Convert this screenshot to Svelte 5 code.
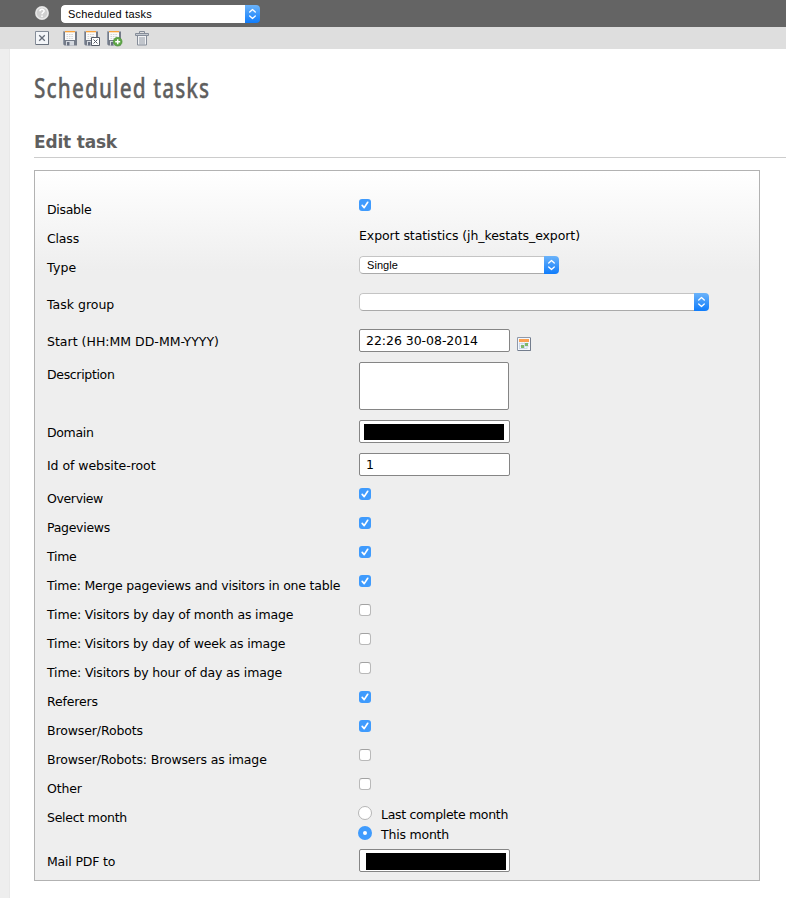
<script>
  const rows = [
    { label: 'Disable', w: 44.3, h: 29, kind: 'check', on: true },
    { label: 'Class', w: 32, h: 29, kind: 'text', value: 'Export statistics (jh_kestats_export)', vw: 221 },
    { label: 'Type', w: 29.5, h: 37, kind: 'select', value: 'Single', size: 200 },
    { label: 'Task group', w: 67.3, h: 37, kind: 'select', value: '', size: 350 },
    { label: 'Start (HH:MM DD-MM-YYYY)', w: 172, h: 33, kind: 'date', value: '22:26 30-08-2014', vw: 112 },
    { label: 'Description', w: 67.5, h: 58, kind: 'area' },
    { label: 'Domain', w: 46.5, h: 33, kind: 'redacted', x: 4, y: 3, bh: 16 },
    { label: 'Id of website-root', w: 108.5, h: 33, kind: 'input', value: '1', vw: 8 },
    { label: 'Overview', w: 56, h: 29, kind: 'check', on: true },
    { label: 'Pageviews', w: 63, h: 29, kind: 'check', on: true },
    { label: 'Time', w: 29.5, h: 29, kind: 'check', on: true },
    { label: 'Time: Merge pageviews and visitors in one table', w: 293.2, h: 29, kind: 'check', on: true },
    { label: 'Time: Visitors by day of month as image', w: 246.2, h: 29, kind: 'check' },
    { label: 'Time: Visitors by day of week as image', w: 238.3, h: 29, kind: 'check' },
    { label: 'Time: Visitors by hour of day as image', w: 235, h: 29, kind: 'check' },
    { label: 'Referers', w: 51, h: 29, kind: 'check', on: true },
    { label: 'Browser/Robots', w: 96, h: 29, kind: 'check', on: true },
    { label: 'Browser/Robots: Browsers as image', w: 219.7, h: 29, kind: 'check' },
    { label: 'Other', w: 34.7, h: 29, kind: 'check' },
    { label: 'Select month', w: 80, h: 44, kind: 'radios' },
    { label: 'Mail PDF to', w: 68.2, h: 33, kind: 'redacted', x: 6, y: 3, bh: 17 },
  ];

  // Tracks the text so that it takes up the given width.
  function fit(node, width) {
    const natural = node.getBoundingClientRect().width;
    node.style.letterSpacing = `${(width - natural) / node.textContent.length}px`;
  }
</script>

{#snippet select(value, size, top)}
  <div class="select" class:top style:width="{size}px">
    <span class="value">{#if value}<span use:fit={top ? 84 : 31}>{value}</span>{/if}</span>
    <span class="arrows">
      <svg width="9" height="12" viewBox="0 0 9 12" fill="none" stroke="#fff" stroke-width="1.3" stroke-linecap="round" stroke-linejoin="round">
        <path d="M1.700 4 4.500 1.500l2.800 2.500M1.700 8l2.800 2.500 2.800-2.500" />
      </svg>
    </span>
  </div>
{/snippet}

{#snippet floppy()}
  <path d="M0 .5h14v14H1.500L0 13z" fill="#747b88" />
  <path d="M.5 1v12" stroke="#929aa7" />
  <path d="M2 0h10v9H2z" fill="#fafafa" />
  <path d="M2 0h10v1.300H2z" fill="#f9a23a" />
  <path d="M3.500 3.500h7M3.500 5.500h7M3.500 7.500h7" stroke="#d3d4d6" stroke-dasharray="1.600 .8" />
  <path d="M3 10h8v4.500H3z" fill="#d5d9df" />
  <path d="M4 11h2.500v3.500H4z" fill="#687080" />
{/snippet}

<header class="bar">
  <svg class="help" width="16" height="16" viewBox="0 0 16 16">
    <circle cx="8" cy="8" r="7" fill="#b9b9b9" />
    <circle cx="8" cy="8" r="6" fill="#cfcfcf" stroke="#e8e8e8" stroke-width="1.300" />
    <path d="M5.900 6.200c.1-2.500 4.200-2.400 4.200-.2 0 1.500-2.100 1.500-2.100 3.200M8 10.500V12" fill="none" stroke="#fff" stroke-width="1.500" />
  </svg>
  {@render select('Scheduled tasks', 199, true)}
</header>

<nav class="tools">
  <svg width="15" height="15" viewBox="0 0 15 15">
    <path d="M.5.5h13v13H.5z" fill="#f3f5f8" stroke="#858d99" />
    <path d="M13.500 1v12.500H1" fill="none" stroke="#69717d" />
    <path d="m4.200 4.200 5.600 5.600m0-5.600-5.600 5.600" stroke="#666d79" stroke-width="1.300" />
  </svg>
  <svg class="save" width="15" height="15" viewBox="0 0 15 15">{@render floppy()}</svg>
  <svg class="save-close" width="17" height="16" viewBox="0 0 17 16">
    {@render floppy()}
    <path d="M7.500 6.500h8v8h-8z" fill="#fff" stroke="#555b65" />
    <path d="m9.500 8.500 4 4m0-4-4 4" stroke="#555c67" />
  </svg>
  <svg class="save-new" width="17" height="16" viewBox="0 0 17 16">
    {@render floppy()}
    <circle cx="10.700" cy="10.700" r="4.400" fill="#5da545" stroke="#4b9338" stroke-width=".6" />
    <path d="M10.700 8.200v5M8.200 10.700h5" stroke="#fff" stroke-width="1.500" />
  </svg>
  <svg class="trash" width="15" height="15" viewBox="0 0 15 15" fill="none" stroke="#858c98">
    <path d="M4.500 2.500v-2h5v2" />
    <path d="M.5 2.500h13v2H.5z" fill="#c4c9d0" />
    <path d="M2.500 5v9h9V5" fill="#f2f3f5" />
    <path d="M5 6v7.500M7 6v7.500M9 6v7.500" stroke-width=".9" />
  </svg>
</nav>

<div class="page">
  <aside></aside>
  <main>
    <h1><span>Scheduled tasks</span></h1>
    <h2><span use:fit={83}>Edit task</span></h2>
    <section class="panel">
      {#each rows as r}
        <div class="row" style:height="{r.h}px">
          <div class="label"><span use:fit={r.w}>{r.label}</span></div>
          <div class="control {r.kind}">
            {#if r.kind === 'check'}
              <span class="box" class:on={r.on}>
                {#if r.on}
                  <svg width="12" height="12" viewBox="0 0 12 12"><path d="m3.200 6.400 2 2.200 3.500-5.300" fill="none" stroke="#fff" stroke-width="1.700" stroke-linecap="round" stroke-linejoin="round" /></svg>
                {/if}
              </span>
            {:else if r.kind === 'text'}
              <span use:fit={r.vw}>{r.value}</span>
            {:else if r.kind === 'select'}
              {@render select(r.value, r.size, false)}
            {:else if r.kind === 'area'}
              <div class="field tall"></div>
            {:else if r.kind === 'redacted'}
              <div class="field" style:padding="{r.y}px 0 0 {r.x}px"><i style:height="{r.bh}px"></i></div>
            {:else if r.kind === 'radios'}
              <div class="option"><span class="radio"></span><span use:fit={127}>Last complete month</span></div>
              <div class="option"><span class="radio on"></span><span use:fit={68}>This month</span></div>
            {:else}
              <div class="field typed"><span use:fit={r.vw}>{r.value}</span></div>
              {#if r.kind === 'date'}
                <svg class="calendar" width="14" height="14" viewBox="0 0 14 14">
                  <path d="M.5.5h13v13H.5z" fill="#f5f8fc" stroke="#8f99aa" />
                  <path d="M13.500 1v12.500H1" fill="none" stroke="#737d8d" />
                  <path d="M2 2h10v3H2z" fill="#fba052" />
                  <path d="M2 6.500h10M2 9h10M2 11.500h8M2.500 5.500V12M5 5.500V12M7.500 5.500V12M10 5.500V12" stroke="#c6d3e6" stroke-width=".8" />
                  <path d="M8 6h3v3H8zM4 8h3v3H4z" fill="#7fb86c" />
                </svg>
              {/if}
            {/if}
          </div>
        </div>
      {/each}
    </section>
  </main>
</div>

<style>
  :global(body) { margin: 0; background: #fff; overflow: hidden; }
  .bar, .tools, .page { font-family: 'DejaVu Sans', Verdana, sans-serif; font-size: 12.5px; color: #000; }
  svg { display: block; flex: none; }
  span { white-space: nowrap; }

  .bar { height: 27px; background: #646464; display: flex; padding: 5px 0 0 34px; box-sizing: border-box; }
  .help { margin-right: 11px; }
  .tools { height: 22px; background: #dedede; display: flex; align-items: flex-start; padding: 4px 0 0 35px; box-sizing: border-box; }
  .save { margin-left: 13px; }
  .save-close { margin-left: 6px; }
  .save-new { margin-left: 6px; }
  .trash { margin-left: 11px; }

  .page { display: flex; height: 849px; }
  aside { width: 10px; background: #eee; flex: none; box-sizing: border-box; border-right: 1px solid #e8e8e8; }
  main { flex: 1; padding-left: 24px; }
  h1 { margin: 0; height: 78px; padding-top: 20px; box-sizing: border-box; font: 500 27px/38px 'Noto Sans', sans-serif; color: #5f5f5f; }
  h1 span { display: inline-block; transform: scaleX(.77); transform-origin: 0 0; letter-spacing: 1.4px; -webkit-text-stroke: .3px #5f5f5f; }
  h2 { margin: 0; height: 31px; box-sizing: border-box; border-bottom: 1px solid #ccc; font-size: 17px; line-height: 30px; color: #5f5f5f; }

  .panel { width: 726px; height: 711px; margin-top: 12px; box-sizing: border-box; border: 1px solid #b2b2b2; padding: 24px 0 0 12px;
    background: linear-gradient(#fff 0, #eee 100px); }
  .row { display: flex; }
  .label { width: 312px; line-height: 30px; flex: none; }
  .control { display: flex; align-items: flex-start; padding-top: 2px; }
  .control.check { padding-top: 4px; }
  .control.text { padding-top: 0; line-height: 24px; }
  .control.select { padding-top: 3px; }
  .control.radios { flex-direction: column; padding-top: 1px; }

  .box { width: 12px; height: 12px; box-sizing: border-box; border: 1px solid #b9b9b9; border-top-color: #a2a2a2; border-radius: 3px; background: #fff; }
  .box.on { border: 0; background: #3f9bfd; }
  .field { width: 151px; height: 23px; box-sizing: border-box; border: 1px solid #858585; border-radius: 2px; background: #fff; }
  .field.tall { width: 150px; height: 48px; }
  .field.typed { padding-left: 6px; line-height: 22px; }
  .field i { display: block; width: 140px; background: #000; }
  .calendar { margin: 8px 0 0 7px; }

  .option { display: flex; height: 20px; line-height: 22px; }
  .radio { width: 14px; height: 14px; margin: 2px 9px 0 -1px; box-sizing: border-box; border: 1px solid #b5b5b5; border-radius: 50%; background: #fff; }
  .radio.on { border: 5px solid #3f9bfd; }

  div.select:not(.control) { display: flex; height: 18px; box-sizing: border-box; border-radius: 4px; overflow: hidden; font: 11px/17px 'Liberation Sans', Arial, sans-serif; }
  .value { flex: 1; box-sizing: border-box; padding-left: 7px; background: #fff; border: 1px solid #c4c4c4; border-bottom-color: #aaa; border-right: 0; border-radius: 4px 0 0 4px; }
  .top .value { border-color: #fff; padding-left: 6px; }
  .arrows { width: 15px; display: flex; align-items: center; justify-content: center; background: linear-gradient(#6bb3fa, #0f7cfb); }
</style>
